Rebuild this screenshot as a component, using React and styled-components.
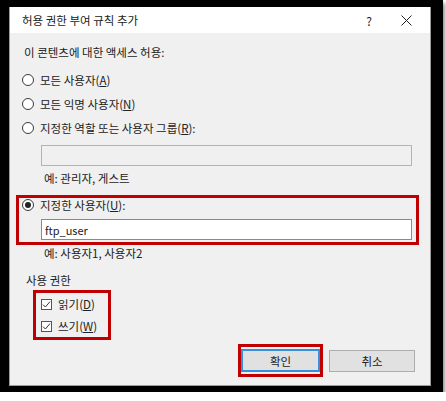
import React from 'react'
import styled, {createGlobalStyle} from 'styled-components'

const GlobalStyles = createGlobalStyle`
  html, body {
    margin: 0;
    background: #ffffff;
  }
  body {
    font-family: "Noto Sans CJK KR", "Noto Sans", sans-serif;
    font-size: 11.5px;
    color: #222;
  }
`

const Frame = styled.div`
  width: 422px;
  padding: 7px 12px 6px 9px;
  background: #000;
  box-shadow: 2px 3px 4px rgba(0, 0, 0, 0.45);
`

const Dialog = styled.div`
  height: 379px;
  box-sizing: border-box;
  background: #f0f0f0;
  border: 1px solid #9c9c9c;
  border-top: none;
  display: flex;
  flex-direction: column;
`

const TitleBar = styled.div`
  height: 26px;
  background: #fff;
  display: flex;
  align-items: center;
  padding-left: 12px;
`

const Title = styled.span`
  flex: 1;
  line-height: 16px;
`

const TitleButton = styled.span`
  width: ${p => p.$w}px;
  display: flex;
  justify-content: center;
  align-items: center;
  font-size: 12px;
`

const Body = styled.div`
  display: flex;
  flex-direction: column;
  padding-top: 11px;
`

const Heading = styled.div`
  margin-left: 14px;
  line-height: 16px;
  margin-bottom: 8px;
`

const RadioRow = styled.label`
  display: flex;
  align-items: center;
  gap: 6px;
  height: ${p => p.$h || 24}px;
  padding-left: ${p => p.$indent}px;
  line-height: 16px;
`

const RadioCircle = styled.span`
  width: 10px;
  height: 10px;
  border-radius: 50%;
  border: 1px solid #3a3a3a;
  background: #fff;
  display: flex;
  align-items: center;
  justify-content: center;
  &::after {
    content: '';
    width: 6px;
    height: 6px;
    border-radius: 50%;
    background: ${p => (p.$checked ? '#222' : 'transparent')};
  }
`

const TextField = styled.div`
  width: 371px;
  height: 21px;
  box-sizing: border-box;
  margin-top: ${p => p.$top}px;
  margin-left: ${p => p.$left}px;
  border: 1px solid ${p => (p.$disabled ? '#b4b4b4' : '#8a8a8a')};
  background: ${p => (p.$disabled ? '#f0f0f0' : '#fff')};
  padding-left: 3px;
  display: flex;
  align-items: center;
  font-size: 11px;
  line-height: 16px;
`

const Hint = styled.div`
  margin-left: 34px;
  margin-top: ${p => p.$top || 0}px;
  line-height: 16px;
`

const Highlight = styled.div`
  border: 3px solid #c00000;
  margin: ${p => p.$margin};
  padding: ${p => p.$pad || 0};
  align-self: ${p => p.$self || 'stretch'};
  width: ${p => (p.$w ? `${p.$w}px` : 'auto')};
  box-sizing: border-box;
`

const SectionLabel = styled.div`
  margin-left: 16px;
  margin-top: 11px;
  line-height: 16px;
`

const CheckRow = styled.label`
  display: flex;
  align-items: center;
  gap: 6px;
  height: 22px;
  padding-left: 5px;
`

const CheckBox = styled.span`
  width: 11px;
  height: 11px;
  box-sizing: border-box;
  border: 1px solid #555;
  background: #fff;
  display: flex;
  align-items: center;
  justify-content: center;
`

const ButtonRow = styled.div`
  display: flex;
  justify-content: flex-end;
  align-items: center;
  gap: 6px;
  margin-top: 4px;
  padding-right: 15px;
`

const Button = styled.button`
  width: ${p => p.$w}px;
  height: ${p => p.$h || 22}px;
  box-sizing: border-box;
  font-family: inherit;
  font-size: 11.5px;
  color: #222;
  background: #e1e1e1;
  border: ${p => (p.$primary ? '2px solid #3a8edb' : '1px solid #adadad')};
  padding: 0;
  display: block;
`

function Check() {
  return (
    <svg width="9" height="9" viewBox="0 0 9 9">
      <path d="M1 4.6 L3.4 7 L8 1.6" fill="none" stroke="#333" strokeWidth="1" />
    </svg>
  )
}

function Close() {
  return (
    <svg width="11" height="11" viewBox="0 0 11 11">
      <path d="M0.5 0.5 L10.5 10.5 M10.5 0.5 L0.5 10.5" stroke="#222" strokeWidth="1" />
    </svg>
  )
}

export default function App() {
  return (
    <>
      <GlobalStyles />
      <Frame>
        <Dialog>
          <TitleBar>
            <Title>허용 권한 부여 규칙 추가</Title>
            <TitleButton $w={26}>?</TitleButton>
            <TitleButton $w={48}><Close /></TitleButton>
          </TitleBar>
          <Body>
            <Heading>이 콘텐츠에 대한 액세스 허용:</Heading>
            <RadioRow $indent={12}>
              <RadioCircle />
              <span>모든 사용자(<u>A</u>)</span>
            </RadioRow>
            <RadioRow $indent={12}>
              <RadioCircle />
              <span>모든 익명 사용자(<u>N</u>)</span>
            </RadioRow>
            <RadioRow $indent={12}>
              <RadioCircle />
              <span>지정한 역할 또는 사용자 그룹(<u>R</u>):</span>
            </RadioRow>
            <TextField $disabled $top={5} $left={31} />
            <Hint $top={4}>예: 관리자, 게스트</Hint>

            <Highlight $margin="9px 11px 0 6px" $pad="0 0 2px 0">
              <RadioRow $indent={3} $h={14}>
                <RadioCircle $checked />
                <span>지정한 사용자(<u>U</u>):</span>
              </RadioRow>
              <TextField $top={7} $left={22}>ftp_user</TextField>
            </Highlight>
            <Hint>예: 사용자1, 사용자2</Hint>

            <SectionLabel>사용 권한</SectionLabel>
            <Highlight $margin="2px 0 0 23px" $self="flex-start" $w={78}>
              <CheckRow>
                <CheckBox><Check /></CheckBox>
                <span>읽기(<u>D</u>)</span>
              </CheckRow>
              <CheckRow>
                <CheckBox><Check /></CheckBox>
                <span>쓰기(<u>W</u>)</span>
              </CheckRow>
            </Highlight>

            <ButtonRow>
              <Highlight $margin="0" $pad="2px 0">
                <Button $primary $w={79} $h={23}>확인</Button>
              </Highlight>
              <Button $w={86}>취소</Button>
            </ButtonRow>
          </Body>
        </Dialog>
      </Frame>
    </>
  )
}
